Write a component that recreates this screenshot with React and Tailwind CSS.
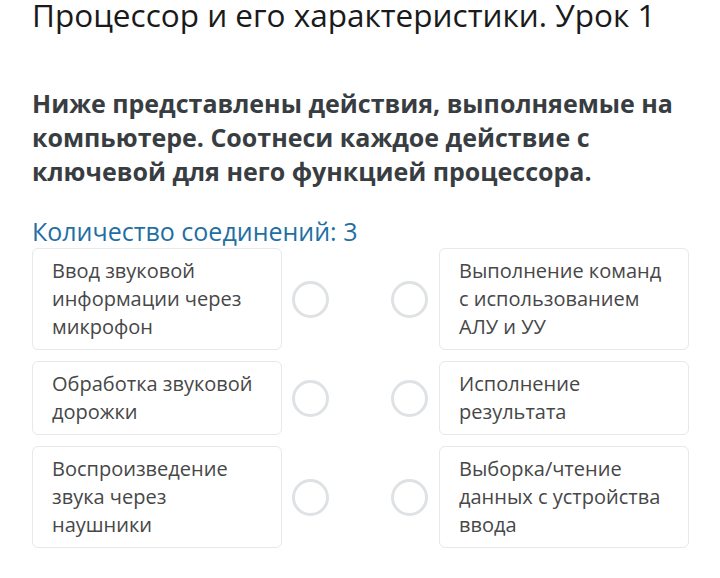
import React from "react";

// Pairs shown in the matching task
const rows = [
  {
    left: "Ввод звуковой информации через микрофон",
    right: "Выполнение команд с использованием АЛУ и УУ",
  },
  {
    left: "Обработка звуковой дорожки",
    right: "Исполнение результата",
  },
  {
    left: "Воспроизведение звука через наушники",
    right: "Выборка/чтение данных с устройства ввода",
  },
];

const Circle = () => (
  <div className="w-[37px] h-[37px] shrink-0 rounded-full border-[3px] border-[#dfe2e4] bg-white" />
);

const Card = ({ children }) => (
  <div className="w-[250px] shrink-0 rounded-md border border-[#e6e8e9] bg-white pl-[19px] pr-5 py-2 text-[20px] leading-[28px] text-[#474747]">
    {children}
  </div>
);

export default function App() {
  return (
    <div
      className="w-[720px] h-[578px] overflow-hidden bg-white pl-8"
      style={{ fontFamily: '"Open Sans", sans-serif' }}
    >
      <h1 className="text-[31.5px] leading-[30px] font-normal text-[#1a1a1a] whitespace-nowrap">
        Процессор и его характеристики. Урок 1
      </h1>

      <p className="mt-[56px] pr-4 text-[25px] leading-[34px] font-bold text-[#383d42]">
        Ниже представлены действия, выполняемые на компьютере. Соотнеси каждое действие с ключевой для него функцией процессора.
      </p>

      <div className="mt-[26px] text-[25px] leading-[34px] text-[#1f6fa3]">
        Количество соединений: 3
      </div>

      <div className="flex flex-col gap-[11px]">
        {rows.map((row, i) => (
          <div key={i} className="flex items-center">
            <Card>{row.left}</Card>
            <div className="ml-[10px]">
              <Circle />
            </div>
            <div className="ml-[62px]">
              <Circle />
            </div>
            <div className="ml-[11px]">
              <Card>{row.right}</Card>
            </div>
          </div>
        ))}
      </div>
    </div>
  );
}
